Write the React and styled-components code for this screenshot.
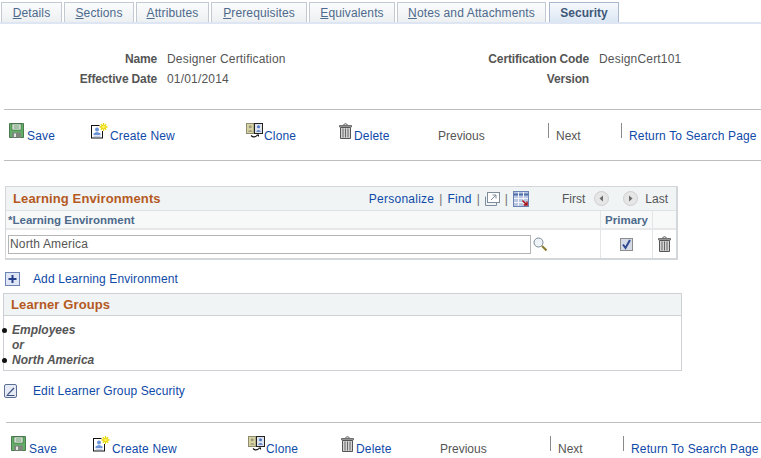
import React from 'react';
import styled, { createGlobalStyle } from 'styled-components';

const TABS = [
  { label: 'Details', key: 'D', width: 61 },
  { label: 'Sections', key: 'S', width: 70 },
  { label: 'Attributes', key: 'A', width: 73 },
  { label: 'Prerequisites', key: 'P', width: 96 },
  { label: 'Equivalents', key: 'E', width: 86 },
  { label: 'Notes and Attachments', key: 'N', width: 149 },
];

const SaveIcon = () => (
  <svg width="15" height="15" viewBox="0 0 15 15">
    <path d="M0.5 0.5H14.5V14.5H0.5Z" fill="#62b066" stroke="#4c7a50" />
    <rect x="3" y="1" width="9" height="6" fill="#eef6ee" stroke="#3f6b44" strokeWidth="0.7" />
    <path d="M4.5 3H10.5M4.5 5H10.5" stroke="#5a8a5e" />
    <rect x="3" y="9.5" width="9" height="5" fill="#7f857f" />
    <rect x="5" y="10.5" width="2" height="3.5" fill="#e4e6e4" />
  </svg>
);

const CreateIcon = () => (
  <svg width="17" height="16" viewBox="0 0 17 16">
    <rect x="0.5" y="2.5" width="11" height="12.5" fill="#fff" stroke="#111" />
    <circle cx="6" cy="6.5" r="2" fill="#6d94d6" />
    <path d="M2.5 12V10.5Q6 7.5 9.5 10.5V12Z" fill="#6d94d6" />
    <path d="M2.5 13.2H9.5" stroke="#9fb6dd" />
    <rect x="8.5" y="0" width="8" height="8" fill="#fff" />
    <path d="M12.5 0V8M8.5 4H16.5M9.8 1.3L15.2 6.7M15.2 1.3L9.8 6.7" stroke="#e8d800" strokeWidth="1.3" />
    <circle cx="12.5" cy="4" r="1.4" fill="#fff36a" />
  </svg>
);

const CloneIcon = () => (
  <svg width="17" height="16" viewBox="0 0 17 16">
    <rect x="0.5" y="0.5" width="7.5" height="10" fill="#d8d3a0" stroke="#8c8c70" />
    <circle cx="4.2" cy="3.8" r="1.5" fill="#9a9a80" />
    <path d="M1.8 8.8Q4.2 5.2 6.8 8.8Z" fill="#9a9a80" />
    <rect x="8.5" y="0.5" width="8" height="10" fill="#dfe3ee" stroke="#222" />
    <circle cx="12.5" cy="3.8" r="1.5" fill="#4d78c4" />
    <path d="M10 8.8Q12.5 5.2 15 8.8Z" fill="#4d78c4" />
    <path d="M5 12.5Q8 15.5 11.5 12.2" fill="none" stroke="#111" strokeWidth="1.1" />
    <path d="M10.5 11.5H13V14Z" fill="#111" />
  </svg>
);

const TrashIcon = () => (
  <svg width="13" height="16" viewBox="0 0 13 16">
    <path d="M4.5 1.5Q6.5 0 8.5 1.5" fill="none" stroke="#555" />
    <path d="M0.5 2.5H12.5V4H0.5Z" fill="#bbb" stroke="#555" strokeWidth="0.8" />
    <path d="M1.5 4.5H11.5V15.5H1.5Z" fill="#d4d4d4" stroke="#555" />
    <path d="M4 5.5V14.5M6.5 5.5V14.5M9 5.5V14.5" stroke="#666" />
  </svg>
);

const PopupIcon = () => (
  <svg width="15" height="14" viewBox="0 0 15 14">
    <rect x="2.5" y="0.5" width="12" height="10" fill="#fff" stroke="#7f8c9c" />
    <path d="M0.5 4.5V13.5H11.5V10.5" fill="none" stroke="#7f8c9c" />
    <path d="M6 8L11 3M7.5 3H11V6.5" fill="none" stroke="#7f8c9c" />
  </svg>
);

const DownloadIcon = () => (
  <svg width="16" height="16" viewBox="0 0 16 16">
    <rect x="0.5" y="0.5" width="15" height="15" fill="#b9c7e2" stroke="#6a83b5" />
    <path d="M0.5 3.5H15.5" stroke="#4f6fa8" strokeWidth="2" />
    <path d="M5.5 1V15M10.5 1V15M1 7.5H15M1 11.5H15" stroke="#f0f3f9" />
    <path d="M9.5 9.5L14 14M14 10.5V14H10.5" fill="none" stroke="#a8141c" strokeWidth="1.6" />
  </svg>
);

const SearchIcon = () => (
  <svg width="14" height="14" viewBox="0 0 14 14">
    <circle cx="5.5" cy="5.5" r="4.5" fill="#eef3f7" stroke="#7a8a99" />
    <path d="M9 9L13.5 13.5" stroke="#8a7a2a" strokeWidth="2" />
  </svg>
);

const NavButton = ({ dir }) => (
  <svg width="15" height="15" viewBox="0 0 15 15">
    <circle cx="7.5" cy="7.5" r="7" fill="#e6e6e6" stroke="#cfcfcf" />
    <path d={dir === 'left' ? 'M9 4.5V10.5L5.5 7.5Z' : 'M6 4.5V10.5L9.5 7.5Z'} fill="#6b6b6b" />
  </svg>
);

const PlusIcon = () => (
  <svg width="15" height="14" viewBox="0 0 15 14">
    <rect x="0.5" y="0.5" width="14" height="13" fill="#dfe6f5" stroke="#6d82b5" />
    <path d="M3.5 7H11.5M7.5 3V11" stroke="#27408b" strokeWidth="2" />
  </svg>
);

const EditIcon = () => (
  <svg width="13" height="14" viewBox="0 0 13 14">
    <rect x="0.5" y="0.5" width="12" height="13" rx="1.5" fill="#e6ebf5" stroke="#5e6f96" />
    <path d="M3 10.5L9.5 3.5L10.5 4.5L4 11Z" fill="#3b4f80" />
    <path d="M2.5 11.5H10.5" stroke="#3b4f80" />
  </svg>
);

const Toolbar = () => (
  <ToolbarRow>
    <ToolItem $width={82}><SaveIcon /><ToolLink $gap={3}>Save</ToolLink></ToolItem>
    <ToolItem $width={155}><CreateIcon /><ToolLink>Create New</ToolLink></ToolItem>
    <ToolItem $width={93}><CloneIcon /><ToolLink $gap={1}>Clone</ToolLink></ToolItem>
    <ToolItem $width={99}><TrashIcon /><ToolLink>Delete</ToolLink></ToolItem>
    <ToolItem $width={110}><ToolMuted>Previous</ToolMuted></ToolItem>
    <ToolItem $width={73}><ToolDivider /><ToolMuted>Next</ToolMuted></ToolItem>
    <ToolItem><ToolDivider /><ToolLink $gap={0}>Return To Search Page</ToolLink></ToolItem>
  </ToolbarRow>
);

const App = () => {
  return (
    <Page>
      <GlobalStyle />
      <TabBar>
        {TABS.map(tab => (
          <Tab key={tab.label} $width={tab.width}>
            <u>{tab.key}</u>
            {tab.label.slice(1)}
          </Tab>
        ))}
        <ActiveTab>Security</ActiveTab>
      </TabBar>

      <Summary>
        <SummaryLabel>Name</SummaryLabel>
        <SummaryValue>Designer Certification</SummaryValue>
        <SummaryLabel>Certification Code</SummaryLabel>
        <SummaryValue>DesignCert101</SummaryValue>
        <SummaryLabel>Effective Date</SummaryLabel>
        <SummaryValue>01/01/2014</SummaryValue>
        <SummaryLabel>Version</SummaryLabel>
        <SummaryValue />
      </Summary>

      <Rule />
      <Toolbar />
      <Rule $gap={9} />

      <EnvGrid>
        <GridTitleBar>
          <PanelTitle>Learning Environments</PanelTitle>
          <GridTools>
            <GridLink>Personalize</GridLink>
            <Pipe>|</Pipe>
            <GridLink>Find</GridLink>
            <Pipe>|</Pipe>
            <PopupIcon />
            <Pipe>|</Pipe>
            <DownloadIcon />
            <First>First</First>
            <NavButton dir="left" />
            <NavGap />
            <NavButton dir="right" />
            <Last>Last</Last>
          </GridTools>
        </GridTitleBar>
        <ColumnRow>
          <ColumnHead>*Learning Environment</ColumnHead>
          <PrimaryHead>Primary</PrimaryHead>
          <DeleteHead />
        </ColumnRow>
        <DataRow>
          <InputCell>
            <TextBox>North America</TextBox>
            <SearchIcon />
          </InputCell>
          <CheckCell>
            <CheckBox>
              <svg width="11" height="11" viewBox="0 0 11 11">
                <path d="M2 5.5L4.5 9L9 1" fill="none" stroke="#2f4a94" strokeWidth="2" />
              </svg>
            </CheckBox>
          </CheckCell>
          <TrashCell><TrashIcon /></TrashCell>
        </DataRow>
      </EnvGrid>

      <AddRow>
        <PlusIcon />
        <RowLink>Add Learning Environment</RowLink>
      </AddRow>

      <GroupPanel>
        <GroupTitle><PanelTitle>Learner Groups</PanelTitle></GroupTitle>
        <GroupBody>
          <GroupItem>Employees</GroupItem>
          <GroupOr>or</GroupOr>
          <GroupItem>North America</GroupItem>
        </GroupBody>
      </GroupPanel>

      <EditRow>
        <EditIcon />
        <RowLink>Edit Learner Group Security</RowLink>
      </EditRow>

      <Rule $gap={24} $left={6} />
      <BottomBar><Toolbar /></BottomBar>
    </Page>
  );
};

const GlobalStyle = createGlobalStyle`
  html, body {
    margin: 0;
    padding: 0;
    background: #fff;
  }
  body {
    font-family: "Liberation Sans", Arial, sans-serif;
    font-size: 12px;
    color: #555;
  }
`;

const Page = styled.div`
  width: 761px;
  height: 458px;
  overflow: hidden;
  padding-top: 2px;
  box-sizing: border-box;
`;

const TabBar = styled.div`
  display: flex;
  gap: 2px;
  height: 20px;
  padding-left: 1px;
  border-bottom: 2px solid #dde6f2;
`;

const Tab = styled.div`
  width: ${props => props.$width}px;
  box-sizing: border-box;
  height: 20px;
  border: 1px solid #c3c9d2;
  border-bottom: 0;
  background: linear-gradient(#fbfcfc, #edf0f2);
  color: #4d6a8c;
  text-align: center;
  letter-spacing: 0.13px;
  line-height: 21px;
`;

const ActiveTab = styled(Tab)`
  width: 70px;
  margin-left: 1px;
  border-color: #a9b8cf;
  background: linear-gradient(#f6f9fc, #dce7f4);
  color: #3f5878;
  font-weight: bold;
  letter-spacing: 0;
`;

const Summary = styled.div`
  display: grid;
  grid-template-columns: 157px 221px 211px 1fr;
  grid-auto-rows: 20px;
  padding-top: 25px;
  height: 60px;
  line-height: 20px;
`;

const SummaryLabel = styled.div`
  text-align: right;
  font-weight: bold;
  color: #555;
  letter-spacing: -0.15px;
`;

const SummaryValue = styled.div`
  padding-left: 10px;
  color: #555;
  letter-spacing: 0.18px;
`;

const Rule = styled.div`
  height: 1px;
  margin-top: ${props => props.$gap || 0}px;
  margin-left: ${props => props.$left || 4}px;
  background: #bdbdbd;
`;

const ToolbarRow = styled.div`
  display: flex;
  align-items: flex-start;
  height: 28px;
  padding: 13px 0 0 9px;
`;

const ToolItem = styled.div`
  display: flex;
  align-items: flex-start;
  flex: none;
  width: ${props => (props.$width ? `${props.$width}px` : 'auto')};
  height: 18px;
`;

const ToolLink = styled.span`
  margin: 6px 0 0 ${props => (props.$gap === undefined ? 2 : props.$gap)}px;
  color: #0f4aa8;
  line-height: 15px;
  letter-spacing: 0.15px;
  white-space: nowrap;
`;

const ToolMuted = styled.span`
  margin-top: 6px;
  color: #555;
  line-height: 15px;
`;

const ToolDivider = styled.span`
  width: 1px;
  height: 15px;
  margin-right: 7px;
  background: #8a8a8a;
`;

const BottomBar = styled.div`
  padding-left: 2px;
`;

const EnvGrid = styled.div`
  width: 673px;
  box-sizing: border-box;
  margin: 25px 0 0 5px;
  border: 1px solid #d3d7da;
  border-bottom-width: 2px;
  border-right-width: 2px;
`;

const GridTitleBar = styled.div`
  display: flex;
  justify-content: space-between;
  align-items: center;
  height: 23px;
  padding: 0 8px 0 7px;
  background: #f1f4f5;
  border-bottom: 1px solid #e0e3e5;
`;

const PanelTitle = styled.div`
  color: #b5591f;
  font-size: 13px;
  font-weight: bold;
  letter-spacing: 0.12px;
`;

const GridTools = styled.div`
  display: flex;
  align-items: center;
  color: #555;
`;

const GridLink = styled.span`
  color: #0f4aa8;
  letter-spacing: 0.25px;
`;

const Pipe = styled.span`
  margin: 0 5px;
  color: #6f6f6f;
`;

const First = styled.span`
  margin: 0 9px 0 33px;
`;

const NavGap = styled.span`
  width: 14px;
`;

const Last = styled.span`
  margin-left: 7px;
`;

const ColumnRow = styled.div`
  display: flex;
  height: 17px;
  background: #f7f8f8;
  border-bottom: 2px solid #e6e8e9;
  color: #4d6a8c;
  font-size: 11.5px;
  font-weight: bold;
  line-height: 18px;
`;

const ColumnHead = styled.div`
  flex: 1;
  padding-left: 2px;
`;

const PrimaryHead = styled.div`
  width: 51px;
  border-left: 1px solid #e3e5e7;
  text-align: center;
`;

const DeleteHead = styled.div`
  width: 23px;
  border-left: 1px solid #e3e5e7;
`;

const DataRow = styled.div`
  display: flex;
  height: 28px;
`;

const InputCell = styled.div`
  flex: 1;
  display: flex;
  align-items: center;
  gap: 2px;
  padding: 0 0 0 2px;
`;

const TextBox = styled.div`
  width: 523px;
  height: 19px;
  box-sizing: border-box;
  padding-left: 1px;
  border: 1px solid #b5b5b5;
  color: #555;
  letter-spacing: 0.15px;
  line-height: 16px;
`;

const CheckCell = styled.div`
  width: 51px;
  display: flex;
  align-items: center;
  justify-content: center;
  border-left: 1px solid #e3e5e7;
`;

const CheckBox = styled.div`
  display: flex;
  align-items: center;
  justify-content: center;
  width: 11px;
  height: 11px;
  border: 1px solid #8d8d8d;
  background: #d5dbe6;
`;

const TrashCell = styled.div`
  width: 23px;
  display: flex;
  align-items: center;
  justify-content: center;
  border-left: 1px solid #e3e5e7;
`;

const AddRow = styled.div`
  display: flex;
  align-items: center;
  height: 15px;
  margin: 11px 0 0 5px;
`;

const RowLink = styled.span`
  margin-left: 13px;
  color: #0f4aa8;
  letter-spacing: 0.12px;
`;

const GroupPanel = styled.div`
  width: 679px;
  box-sizing: border-box;
  margin: 7px 0 0 3px;
  border: 1px solid #cdd1d6;
`;

const GroupTitle = styled.div`
  display: flex;
  align-items: center;
  height: 21px;
  padding-left: 7px;
  background: #f1f4f5;
  border-bottom: 1px solid #cdd1d6;
`;

const GroupBody = styled.ul`
  margin: 0;
  padding: 7px 0 2px 8px;
  list-style: none;
  color: #555;
  font-style: italic;
  font-weight: bold;
  line-height: 15px;
`;

const GroupItem = styled.li`
  position: relative;
  &::before {
    content: '';
    position: absolute;
    left: -10px;
    top: 5px;
    width: 5px;
    height: 5px;
    border-radius: 50%;
    background: #111;
  }
`;

const GroupOr = styled.li``;

const EditRow = styled(AddRow)`
  margin: 12px 0 0 4px;
  & > span {
    margin-left: 16px;
  }
`;

export default App;
